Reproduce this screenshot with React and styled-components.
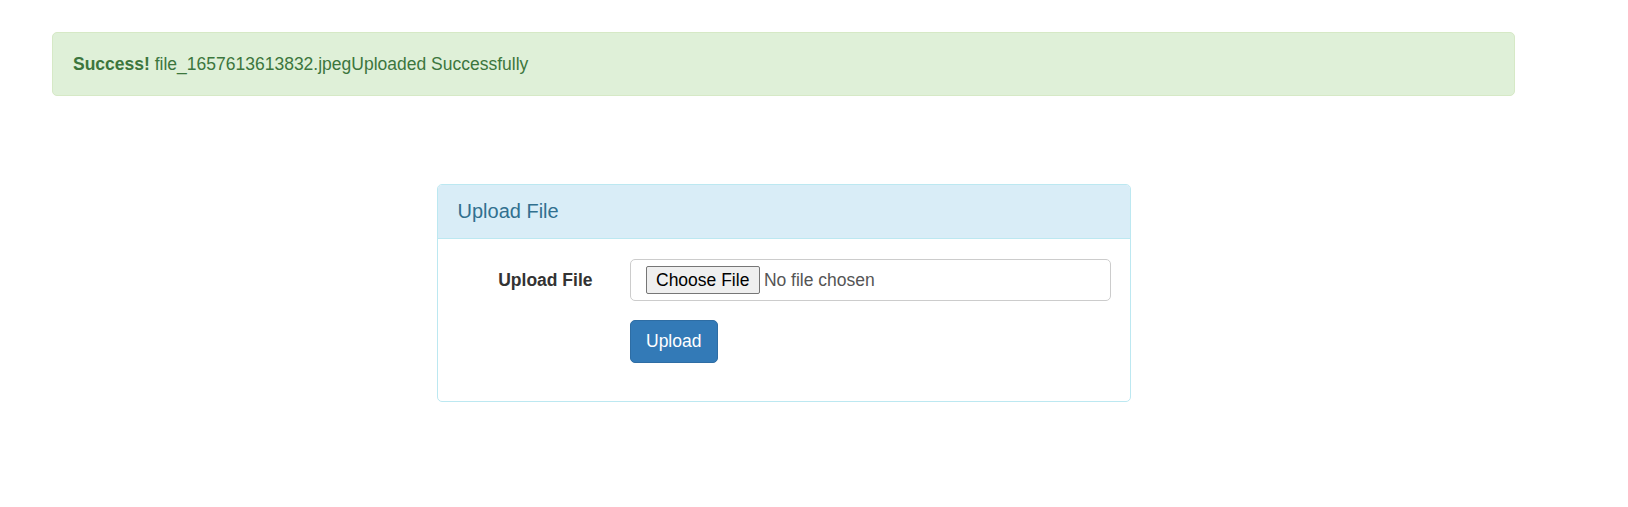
import React from 'react';
import styled, { createGlobalStyle } from 'styled-components';

const GlobalStyle = createGlobalStyle`
    body {
        margin: 0;
        background: #FFFFFF;
        font-family: "Liberation Sans", Arial, Helvetica, sans-serif;
        color: #333333;
    }
    * {
        box-sizing: border-box;
    }
`
const Container = styled.div`
    width: 1463px;
    margin-left: 52px;
    padding-top: 32px;
`
const Alert = styled.div`
    background-color: #DFF0D8;
    border: 1px solid #D6E9C6;
    border-radius: 5px;
    color: #3C763D;
    font-size: 17.5px;
    line-height: 25px;
    padding: 19px 20px 18px;

    strong {
        font-weight: bold;
    }
`
const Panel = styled.div`
    width: 694px;
    margin: 88px auto 0;
    border: 1px solid #BCE8F1;
    border-radius: 5px;
    background: #FFFFFF;
    overflow: hidden;
`
const PanelHeading = styled.div`
    background-color: #D9EDF7;
    border-bottom: 1px solid #BCE8F1;
    color: #31708F;
    font-size: 20px;
    line-height: 23px;
    padding: 15px 20px;
`
const PanelBody = styled.form`
    padding: 20px 18px 38px;
`
const FormGroup = styled.div`
    display: grid;
    grid-template-columns: 137px 481px;
    column-gap: 37px;
    align-items: center;
    margin-bottom: ${({ last }) => (last ? '0' : '19px')};
`
const Label = styled.label`
    text-align: right;
    font-weight: bold;
    font-size: 17.5px;
    color: #333333;
`
const FileInput = styled.input`
    width: 100%;
    height: 42px;
    padding: 6px 15px;
    border: 1px solid #CCCCCC;
    border-radius: 5px;
    font-family: "Liberation Sans", Arial, sans-serif;
    font-size: 17.5px;
    color: #555555;
    background: #FFFFFF;

    &::file-selector-button {
        height: 28px;
        padding: 0 9.5px;
        margin-right: 4px;
        font-family: "Liberation Sans", Arial, sans-serif;
        font-size: 17.5px;
        color: #000000;
        background: #EFEFEF;
        border: 1px solid #767676;
        border-radius: 2px;
    }
`
const Button = styled.button`
    height: 43px;
    padding: 0 15.5px;
    font-family: "Liberation Sans", Arial, sans-serif;
    font-size: 17.5px;
    color: #FFFFFF;
    background-color: #337AB7;
    border: 1px solid #2E6DA4;
    border-radius: 5px;
    cursor: pointer;
`

const App = () => {
    return (
        <>
            <GlobalStyle />
            <Container>
                <Alert>
                    <strong>Success!</strong> file_1657613613832.jpegUploaded Successfully
                </Alert>
                <Panel>
                    <PanelHeading>Upload File</PanelHeading>
                    <PanelBody onSubmit={(e) => e.preventDefault()}>
                        <FormGroup>
                            <Label htmlFor="file">Upload File</Label>
                            <FileInput type="file" id="file" />
                        </FormGroup>
                        <FormGroup last>
                            <span />
                            <div>
                                <Button type="submit">Upload</Button>
                            </div>
                        </FormGroup>
                    </PanelBody>
                </Panel>
            </Container>
        </>
    )
}

export default App;
